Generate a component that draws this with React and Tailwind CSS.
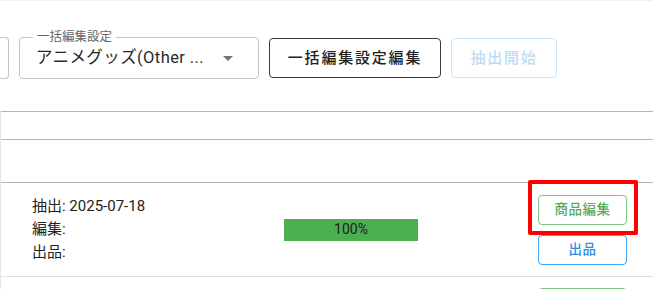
import React from "react";

const ArrowDrop = () => (
  <svg className="w-[24px] h-[24px]" viewBox="0 0 24 24" fill="#757575">
    <path d="M7 10l5 5 5-5z" />
  </svg>
);

const InfoRow = ({ extracted, edited, listed }) => (
  <div className="relative h-[94px] border-t border-[#b5b5b5] flex items-center">
    {/* dates */}
    <div className="w-[283px] pl-[31px] text-[15px] leading-[23px] text-[#222]">
      <div>抽出: {extracted}</div>
      <div>編集: {edited}</div>
      <div>出品: {listed}</div>
    </div>

    {/* progress */}
    <div className="w-[134px] h-[22px] bg-[#4caf50] flex items-center justify-center text-[14px] text-[#222]">
      100%
    </div>

    {/* actions */}
    <div className="ml-[120px] w-[89px] flex flex-col gap-[10px]">
      <button className="h-[30px] border border-[#7cc47f] rounded-[4px] text-[13.5px] font-medium tracking-[0.5px] text-[#5aaa5e]">
        商品編集
      </button>
      <button className="h-[30px] border border-[#42a5f5] rounded-[4px] text-[13.5px] font-medium tracking-[0.5px] text-[#2f8de4]">
        出品
      </button>
    </div>

    {/* highlight */}
    <div className="absolute left-[527px] top-[-3px] w-[110px] h-[55px] border-[4px] border-[#ff0000] rounded-[2px]"></div>
  </div>
);

export default function App() {
  return (
    <div className="w-[653px] h-[289px] overflow-hidden bg-white font-[Roboto,'Noto_Sans_CJK_JP',sans-serif]">
      {/* toolbar */}
      <div className="h-[111px] border-t border-[#f0f0f0] pt-[36px] flex items-start gap-[10px]">
        <div className="w-[9px] h-[42px] border border-l-0 border-[#c4c4c4] rounded-r-[4px]"></div>

        <div className="relative w-[240px] h-[42px] border border-[#c4c4c4] rounded-[4px] flex items-center pl-[16px] pr-[18px]">
          <span className="absolute left-[13px] top-[-9px] px-[4px] bg-white text-[12.5px] leading-[16px] text-[#666]">
            一括編集設定
          </span>
          <span className="flex-1 text-[16.5px] tracking-[0.4px] text-[#2a2a2a] whitespace-nowrap">アニメグッズ(Other ...</span>
          <ArrowDrop />
        </div>

        <button className="mt-[1px] w-[172px] h-[40px] border border-[#3a3a3a] rounded-[4px] text-[15px] font-medium tracking-[1.8px] text-[#222]">
          一括編集設定編集
        </button>

        <button className="mt-[1px] w-[106px] h-[40px] border border-[#cde5fa] rounded-[4px] text-[15px] font-medium tracking-[1.8px] text-[#b9dcf8]">
          抽出開始
        </button>
      </div>

      {/* table */}
      <div className="border-l border-[#e6e6e6]">
        <div className="h-[28px] border-t border-[#b5b5b5]"></div>
        <div className="h-[43px] border-t border-[#b5b5b5]"></div>
        <InfoRow extracted="2025-07-18" edited="" listed="" />
        <div className="h-[40px] border-t border-[#e0e0e0] flex">
          <div className="ml-[537px] mt-[11px] w-[89px] h-[30px] border border-[#7cc47f] rounded-[4px]"></div>
        </div>
      </div>
    </div>
  );
}
